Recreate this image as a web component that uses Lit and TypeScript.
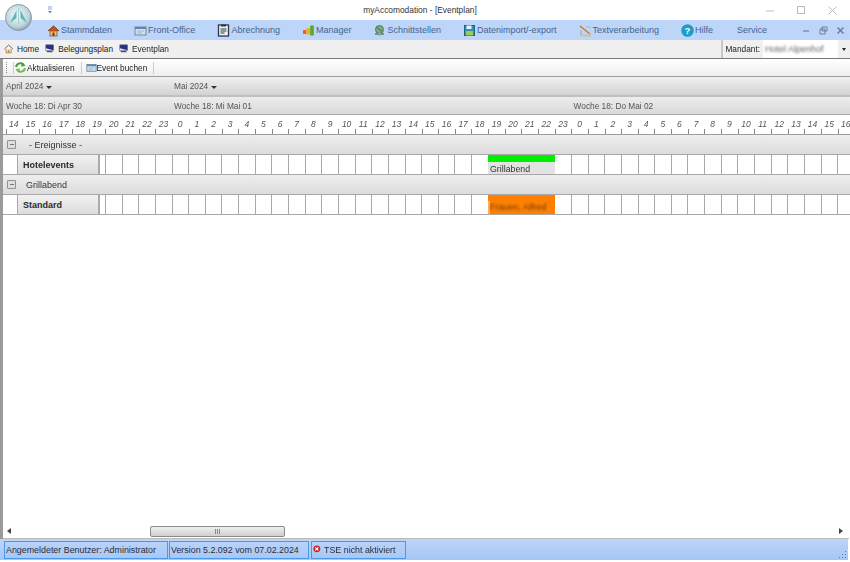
import { LitElement, html, css, svg } from "lit";
import { customElement } from "lit/decorators.js";

const HOUR_W = 16.65;
const hours: number[] = [];
for (let i = 0; i < 51; i++) hours.push((14 + i) % 24);
const rowCells = Array.from({ length: 45 });

const icons = {
  stamm: svg`<path d="M1 7 6.5 2 12 7" fill="#c8501e" stroke="#7a3a18" stroke-width="1"/><rect x="3" y="7" width="7" height="5" fill="#e8c070" stroke="#8a5a28" stroke-width=".8"/><rect x="5.5" y="8.5" width="2" height="3.5" fill="#7a3a18"/>`,
  front: svg`<rect x="1" y="3" width="11" height="8" fill="#cfe2f0" stroke="#6b8aa5"/><path d="M1 3h11v2H1z" fill="#5f87ad"/><path d="M3 7h7M3 9h5" stroke="#9ab" stroke-width=".8"/>`,
  abr: svg`<rect x="1.5" y="1" width="10" height="11" fill="#f3f3f3" stroke="#26384e" stroke-width="1.3"/><rect x="4" y=".5" width="5" height="2" fill="#26384e"/><path d="M3.5 5h6M3.5 7h6M3.5 9h4" stroke="#26384e"/>`,
  mgr: svg`<rect x="1" y="6" width="3.4" height="4" fill="#e8641e"/><rect x="4.6" y="4" width="3.4" height="6.5" fill="#f0b020"/><rect x="8.2" y="1.5" width="3.6" height="10" fill="#58a82c"/>`,
  schn: svg`<circle cx="6.5" cy="5.5" r="4" fill="#7fb27a" stroke="#51775a"/><path d="M4 3.5 9 7.5M2 10h9" stroke="#5a7a8c" stroke-width="1.4"/><rect x="5" y="9" width="3" height="2.5" fill="#8aa0b0"/>`,
  daten: svg`<rect x="1.5" y="1.5" width="10" height="10" fill="#2f8fb5" stroke="#1e6480"/><rect x="3.5" y="1.5" width="5" height="3.5" fill="#f2f2f2"/><rect x="3" y="7" width="7" height="4.5" fill="#9ccb57"/>`,
  text: svg`<path d="M1 2 11 10" stroke="#d07a2a" stroke-width="1.6"/><path d="M1 11.5h11" stroke="#e7c23d" stroke-width="1.5"/><path d="M2 6v5" stroke="#9db7d0" stroke-width="1.5"/><path d="M7 3h5" stroke="#9db7d0"/>`,
  hilfe: svg`<circle cx="6.5" cy="6.5" r="6.3" fill="#1e9cc8"/>`,
  home: svg`<path d="M.5 6 5.5 1.2 10.5 6" fill="none" stroke="#6a4a20" stroke-width="1"/><path d="M2.5 6v4.5h6V6" fill="#f6e7c2" stroke="#8a6a3a" stroke-width=".8"/><rect x="4.5" y="7" width="2" height="3.5" fill="#d98a3a"/>`,
  monitor: svg`<rect x="1" y="1" width="9" height="6.5" fill="#24308c" stroke="#5a6070" stroke-width=".7"/><path d="M1 5 10 7.5H1z" fill="#e6e6f0"/><path d="M2 9h7" stroke="#555" stroke-width="1.5"/>`,
  refresh: svg`<path d="M2 6a4.5 4.5 0 0 1 8-2" fill="none" stroke="#4d9a3a" stroke-width="2"/><path d="M8 1.5 11.5 5 7 5.5z" fill="#4d9a3a"/><path d="M11 7a4.5 4.5 0 0 1-8 2" fill="none" stroke="#74b85c" stroke-width="2"/><path d="M5 11.5 1.5 8 6 7.5z" fill="#74b85c"/>`,
  tse: svg`<circle cx="5" cy="5" r="4.5" fill="#c8242a"/><path d="M3 3l4 4M7 3 3 7" stroke="#fff" stroke-width="1.5"/>`,
};

function icon(shape: unknown, w = 13) {
  return html`<svg class="ic" width=${w} height=${w} viewBox="0 0 13 13">${shape}</svg>`;
}

@customElement("app-root")
export class AppRoot extends LitElement {
  static styles = css`
    :host {
      display: block;
      width: 850px;
      height: 562px;
      background: #fff;
      font-family: "Liberation Sans", Arial, sans-serif;
      color: #333;
      overflow: hidden;
    }
    .win { position: relative; display: flex; flex-direction: column; height: 562px; filter: blur(0.3px); }
    .ic { flex: none; display: block; }
    .title { height: 20px; flex: none; display: flex; align-items: center; position: relative; background: #fff; }
    .qa { margin-left: 47px; display: block; }
    .title-text { position: absolute; left: 0; right: 0; top: 4px; text-align: center; font-size: 8.4px; line-height: 12px; color: #333; padding-right: 10px; }
    .winbtns { margin-left: auto; display: flex; gap: 20px; padding-right: 12px; align-items: center; }
    .winbtns svg { display: block; }
    .logo { position: absolute; left: 5px; top: 4px; width: 27px; height: 27px; }
    .menu { height: 20px; flex: none; background: #bcd5f8; display: flex; align-items: center; padding-left: 47px; font-size: 9px; color: #44648f; gap: 22px; }
    .mi { display: flex; align-items: center; gap: 1px; white-space: nowrap; }
    .service { margin-left: 2px; }
    .mdi { margin-left: auto; display: flex; gap: 8px; padding-right: 5px; align-items: center; }
    .mdi svg { display: block; }
    .crumbs { height: 18px; flex: none; background: #f0f0f0; display: flex; align-items: center; padding-left: 4px; gap: 6px; font-size: 8.3px; color: #222; border-bottom: 1px solid #777; }
    .crumb { display: flex; align-items: center; gap: 2px; white-space: nowrap; }
    .mandant { margin-left: auto; display: flex; align-items: center; height: 18px; border-left: 2px solid #c8c8c8; padding-left: 2px; gap: 3px; }
    .combo { width: 87px; height: 18px; background: linear-gradient(90deg, #fff 0 75px, #f0f0f0 75px); display: flex; align-items: center; justify-content: space-between; color: #666; }
    .combo .val { filter: blur(1.2px); padding-left: 2px; font-size: 9px; }
    .caret { width: 0; height: 0; border: 2.5px solid transparent; border-top: 3px solid #222; border-bottom: 0; margin-right: 4px; }
    .body { flex: 1; display: flex; flex-direction: column; border-left: 3px solid #9a9a9a; min-height: 0; }
    .tools { height: 17px; flex: none; background: linear-gradient(#fff, #eeeeee); border-bottom: 1px solid #9a9a9a; display: flex; align-items: center; font-size: 8.3px; color: #222; padding-left: 3px; }
    .grip { width: 1px; height: 11px; border-left: 1px dotted #888; margin-right: 5px; }
    .sep { width: 1px; height: 12px; background: #ccc; margin: 0 4px 0 6px; }
    .tool { display: flex; align-items: center; white-space: nowrap; }
    .sep.first { margin: 0; }
    .gantt { flex: 1; min-height: 0; overflow: hidden; display: flex; flex-direction: column; }
    .hdr { flex: none; display: flex; align-items: center; font-size: 8.3px; color: #555; border-bottom: 1px solid #bdbdbd; white-space: nowrap; padding-left: 3px; }
    .months { height: 18px; background: linear-gradient(#f0f0f0, #d3d3d3); border-bottom: 2px solid #c0c0c0; }
    .months .m { display: flex; align-items: center; gap: 3px; }
    .months .m1 { width: 168px; }
    .months .tri { width: 0; height: 0; border: 3px solid transparent; border-top: 3px solid #333; border-bottom: 0; margin-top: 3px; }
    .weeks { height: 17px; background: linear-gradient(#ededed, #d9d9d9); border-bottom: 1px solid #a9a9a9; }
    .weeks .w1 { width: 168px; }
    .weeks .w2 { width: 399.6px; }
    .ruler { flex: none; height: 19px; display: flex; padding-left: 2.5px; background: #fff; border-bottom: 1px solid #9c9c9c; overflow: hidden; }
    .hour { flex: none; height: 19px; box-sizing: border-box; text-align: center; font-size: 8.5px; line-height: 18px; font-style: italic; color: #555; position: relative; }
    .hour::before { content: ""; position: absolute; left: 0; bottom: 0; height: 5px; width: 1px; background: #888; }
    .group { flex: none; height: 20px; box-sizing: border-box; background: linear-gradient(#eeeeee, #dcdcdc); display: flex; align-items: center; font-size: 9px; color: #333; border-bottom: 1px solid #a8a8a8; padding-left: 4px; }
    .tog { width: 7px; height: 7px; border: 1px solid #8f8f8f; border-radius: 1px; background: #dedede; position: relative; margin-right: 11px; }
    .tog::after { content: ""; position: absolute; left: 1.5px; right: 1.5px; top: 3px; height: 1px; background: #777; }
    .g1 .lab { margin-left: 2px; }
    .g2 .lab { margin-left: -1px; }
    .row { flex: none; height: 20px; box-sizing: border-box; display: flex; border-bottom: 1px solid #a8a8a8; background: #fff; padding-left: 14px; position: relative; overflow: hidden; }
    .name { flex: none; width: 83px; box-sizing: border-box; background: linear-gradient(#f2f2f2, #dcdcdc); border-left: 1px solid #a8a8a8; border-right: 2px solid #aaa; font-weight: 700; font-size: 9px; line-height: 21px; color: #2a2a2a; padding-left: 5px; }
    .cells { flex: none; display: flex; margin-left: 5px; }
    .cell { flex: none; box-sizing: border-box; border-left: 1px solid #a8a8a8; }
    .ev { position: absolute; left: 485px; width: 67px; top: 0; bottom: 0; }
    .ev.hotel { background: #e2e2e2; font-size: 8.8px; color: #333; }
    .ev.hotel .bar { height: 7px; background: #00ef00; }
    .ev.hotel .txt { padding-left: 2px; line-height: 14px; display: block; }
    .ev.guest { background: #ff8000; overflow: hidden; }
    .ev.guest .txt { display: block; font-size: 9px; line-height: 25px; padding-left: 2px; color: #6a3a10; filter: blur(1.1px); white-space: nowrap; }
    .ev.guest::before { content: ""; position: absolute; left: 0; top: 6px; bottom: 0; width: 2px; background: #ffb060; }
    .blank { flex: 1; background: #fff; }
    .scroll { flex: none; height: 14px; background: #fff; display: flex; align-items: center; position: relative; border-bottom: 1px solid #bbb; margin-right: 1px; }
    .arrow { width: 0; height: 0; border: 3px solid transparent; position: absolute; top: 4px; }
    .arrow.l { left: 4px; border-right: 4px solid #444; border-left: 0; }
    .arrow.r { right: 6px; border-left: 4px solid #444; border-right: 0; }
    .thumb { position: absolute; left: 147px; width: 135px; top: 2px; height: 11px; box-sizing: border-box; background: linear-gradient(#efefef, #cfcfcf); border: 1px solid #8a8a8a; border-radius: 2px; display: flex; align-items: center; justify-content: center; }
    .thumb i { width: 5px; height: 5px; background: repeating-linear-gradient(90deg, #888 0 1px, transparent 1px 2px); display: block; }
    .status { height: 21px; flex: none; background: linear-gradient(#bcd5f8, #a7c6f6); display: flex; align-items: center; padding-left: 4px; gap: 1px; font-size: 8.9px; color: #2c2c38; position: relative; margin-right: 2px; }
    .pan { height: 18px; box-sizing: border-box; border: 1px solid #4a98e8; display: flex; align-items: center; padding-left: 1px; white-space: nowrap; gap: 1px; }
    .p1 { width: 164px; }
    .p2 { width: 140px; }
    .p3 { width: 95px; margin-left: 1px; }
    .resize { position: absolute; right: 1px; bottom: 1px; display: block; }
    .foot { height: 2px; flex: none; background: #fff; }
  `;

  render() {
    const wStyle = `width:${HOUR_W}px`;
    const cells = rowCells.map(() => html`<div class="cell" style=${wStyle}></div>`);
    return html`
      <div class="win">
        <div class="title">
          <svg class="qa" width="6" height="8" viewBox="0 0 6 8"><path d="M1 1h4M1 3h4" stroke="#7ea6e0"/><path d="M1 5h4L3 7.5z" fill="#5a86cc"/></svg>
          <div class="title-text">myAccomodation - [Eventplan]</div>
          <div class="winbtns">
            <svg width="11" height="11" viewBox="0 0 11 11"><path d="M1 6h8" stroke="#bbb"/></svg>
            <svg width="11" height="11" viewBox="0 0 11 11"><rect x="1.5" y="1.5" width="7" height="7" fill="none" stroke="#bbb"/></svg>
            <svg width="11" height="11" viewBox="0 0 11 11"><path d="M1.5 1.5l8 8M9.5 1.5l-8 8" stroke="#bbb"/></svg>
          </div>
        </div>
        <div class="menu">
          <span class="mi">${icon(icons.stamm)}Stammdaten</span>
          <span class="mi">${icon(icons.front)}Front-Office</span>
          <span class="mi">${icon(icons.abr)}Abrechnung</span>
          <span class="mi">${icon(icons.mgr)}Manager</span>
          <span class="mi">${icon(icons.schn)}Schnittstellen</span>
          <span class="mi">${icon(icons.daten)}Datenimport/-export</span>
          <span class="mi">${icon(icons.text)}Textverarbeitung</span>
          <span class="mi">${icon(svg`${icons.hilfe}<text x="6.5" y="10" font-size="9.5" font-weight="700" text-anchor="middle" fill="#fff" font-family="Liberation Sans">?</text>`)}Hilfe</span>
          <span class="mi service">Service</span>
          <span class="mdi">
            <svg width="9" height="9" viewBox="0 0 9 9"><path d="M1 5h6" stroke="#6a7f9c" stroke-width="1.2"/></svg>
            <svg width="9" height="9" viewBox="0 0 9 9"><path d="M3 1h5v4H3zM1 3h5v5H1z" fill="#c8d8ef" stroke="#6a7f9c"/></svg>
            <svg width="9" height="9" viewBox="0 0 9 9"><path d="M1.5 1.5l6 6M7.5 1.5l-6 6" stroke="#6a7f9c" stroke-width="1.5"/></svg>
          </span>
        </div>
        <div class="crumbs">
          <span class="crumb">${icon(icons.home, 11)}Home</span>
          <span class="crumb">${icon(icons.monitor, 11)}Belegungsplan</span>
          <span class="crumb">${icon(icons.monitor, 11)}Eventplan</span>
          <span class="mandant">Mandant:
            <span class="combo"><span class="val">Hotel Alpenhof</span><span class="caret"></span></span>
          </span>
        </div>
        <div class="body">
          <div class="tools">
            <span class="grip"></span>
            <span class="sep first"></span>
            <span class="tool">${icon(icons.refresh)}Aktualisieren</span>
            <span class="sep"></span>
            <span class="tool">${icon(icons.front, 11)}Event buchen</span>
            <span class="sep"></span>
          </div>
          <div class="gantt">
            <div class="hdr months">
              <span class="m m1">April 2024 <span class="tri"></span></span>
              <span class="m">Mai 2024 <span class="tri"></span></span>
            </div>
            <div class="hdr weeks">
              <span class="w1">Woche 18: Di Apr 30</span>
              <span class="w2">Woche 18: Mi Mai 01</span>
              <span>Woche 18: Do Mai 02</span>
            </div>
            <div class="ruler">
              ${hours.map((h) => html`<div class="hour" style=${wStyle}>${h}</div>`)}
            </div>
            <div class="group g1"><span class="tog"></span><span class="lab">- Ereignisse -</span></div>
            <div class="row">
              <div class="name">Hotelevents</div>
              <div class="cells">${cells}</div>
              <div class="ev hotel"><div class="bar"></div><span class="txt">Grillabend</span></div>
            </div>
            <div class="group g2"><span class="tog"></span><span class="lab">Grillabend</span></div>
            <div class="row">
              <div class="name">Standard</div>
              <div class="cells">${cells}</div>
              <div class="ev guest"><span class="txt">Frauen, Alfred</span></div>
            </div>
            <div class="blank"></div>
          </div>
          <div class="scroll">
            <span class="arrow l"></span>
            <div class="thumb"><i></i></div>
            <span class="arrow r"></span>
          </div>
        </div>
        <div class="status">
          <div class="pan p1">Angemeldeter Benutzer: Administrator</div>
          <div class="pan p2">Version 5.2.092 vom 07.02.2024</div>
          <div class="pan p3">${icon(icons.tse, 10)}TSE nicht aktiviert</div>
          <svg class="resize" width="9" height="9" viewBox="0 0 9 9"><path d="M7 1h1v1H7zM4 4h1v1H4zM7 4h1v1H7zM1 7h1v1H1zM4 7h1v1H4zM7 7h1v1H7z" fill="#5a7aa5"/></svg>
        </div>
        <div class="foot"></div>
        <svg class="logo" viewBox="0 0 27 27">
          <defs><radialGradient id="lg" cx=".45" cy=".4" r=".65"><stop offset="0" stop-color="#f6fafb"/><stop offset=".7" stop-color="#bcd3dc"/><stop offset="1" stop-color="#7f939e"/></radialGradient></defs>
          <circle cx="13.5" cy="13.5" r="13" fill="url(#lg)" stroke="#8a9aa5"/>
          <path d="M11.5 6 5 19l6.5-5zM15.5 6 22 19l-6.5-5z" fill="#5db8b8"/>
          <path d="M13.5 4v16" stroke="#9fd4d4" stroke-width="1"/>
        </svg>
      </div>
    `;
  }
}
